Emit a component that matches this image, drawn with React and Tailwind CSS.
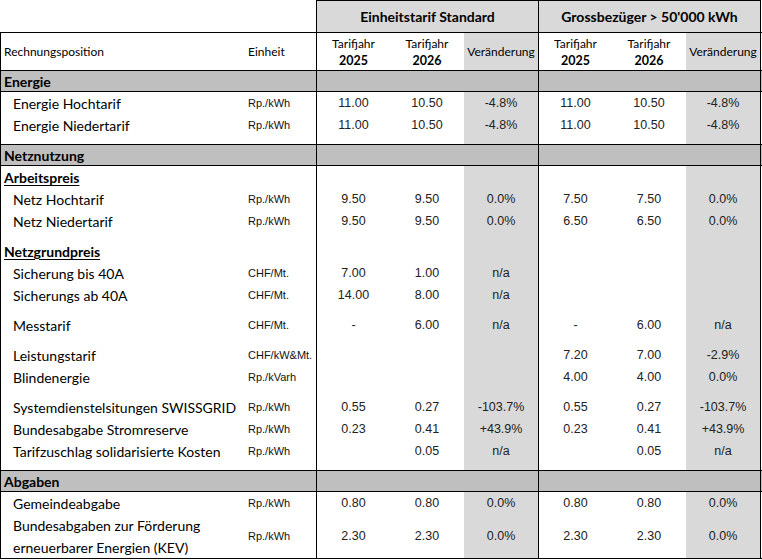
const label = "font-['Lato','Noto_Sans',sans-serif]";
const num = "font-['Liberation_Sans',Arial,sans-serif] text-[12.5px] text-[#222]";
const unitFont = "font-['Liberation_Sans',Arial,sans-serif] text-[11px] text-[#111] whitespace-nowrap";

const rows = [
  { type: 'section', text: 'Energie' },
  { h: 'h-[23px]', text: 'Energie Hochtarif', unit: 'Rp./kWh', v: ['11.00', '10.50', '-4.8%', '11.00', '10.50', '-4.8%'] },
  { h: 'h-[22px]', text: 'Energie Niedertarif', unit: 'Rp./kWh', v: ['11.00', '10.50', '-4.8%', '11.00', '10.50', '-4.8%'] },
  { type: 'spacer' },
  { type: 'section', text: 'Netznutzung' },
  { type: 'sub', h: 'h-[23px]', text: 'Arbeitspreis' },
  { h: 'h-[22px]', text: 'Netz Hochtarif', unit: 'Rp./kWh', v: ['9.50', '9.50', '0.0%', '7.50', '7.50', '0.0%'] },
  { h: 'h-[22px]', text: 'Netz Niedertarif', unit: 'Rp./kWh', v: ['9.50', '9.50', '0.0%', '6.50', '6.50', '0.0%'] },
  { type: 'sub', h: 'h-[30px]', text: 'Netzgrundpreis' },
  { h: 'h-[22px]', text: 'Sicherung bis 40A', unit: 'CHF/Mt.', v: ['7.00', '1.00', 'n/a', '', '', ''] },
  { h: 'h-[22px]', text: 'Sicherungs ab 40A', unit: 'CHF/Mt.', v: ['14.00', '8.00', 'n/a', '', '', ''] },
  { h: 'h-[30px]', text: 'Messtarif', unit: 'CHF/Mt.', v: ['-', '6.00', 'n/a', '-', '6.00', 'n/a'] },
  { h: 'h-[30px]', text: 'Leistungstarif', unit: 'CHF/kW&Mt.', v: ['', '', '', '7.20', '7.00', '-2.9%'] },
  { h: 'h-[22px]', text: 'Blindenergie', unit: 'Rp./kVarh', v: ['', '', '', '4.00', '4.00', '0.0%'] },
  { h: 'h-[30px]', text: 'Systemdienstelsitungen SWISSGRID', unit: 'Rp./kWh', v: ['0.55', '0.27', '-103.7%', '0.55', '0.27', '-103.7%'] },
  { h: 'h-[22px]', text: 'Bundesabgabe Stromreserve', unit: 'Rp./kWh', v: ['0.23', '0.41', '+43.9%', '0.23', '0.41', '+43.9%'] },
  { h: 'h-[22px]', text: 'Tarifzuschlag solidarisierte Kosten', unit: 'Rp./kWh', v: ['', '0.05', 'n/a', '', '0.05', 'n/a'] },
  { type: 'spacer' },
  { type: 'section', text: 'Abgaben' },
  { h: 'h-[23px]', text: 'Gemeindeabgabe', unit: 'Rp./kWh', v: ['0.80', '0.80', '0.0%', '0.80', '0.80', '0.0%'] },
];

const valCols = [
  'w-[74px] border-l border-black',
  'w-[74px]',
  'w-[74px] bg-[#d9d9d9]',
  'w-[74px] border-l border-black',
  'w-[74px]',
  'w-[75px] bg-[#d9d9d9] border-r border-black',
];

function Section({ text }) {
  return (
    <div className="flex h-[22px] border-y border-black bg-[#bfbfbf]">
      <div className={`w-[316px] border-l border-black pl-[3px] flex items-center text-[14px] font-bold text-black ${label}`}>{text}</div>
      <div className="w-[222px] border-l border-black" />
      <div className="w-[223px] border-l border-r border-black" />
    </div>
  );
}

function Body({ h, children, unit, v, align = 'items-end pb-[2px]', unitAlign = 'items-end pb-[4px]' }) {
  const vals = v || ['', '', '', '', '', ''];
  return (
    <div className={`flex ${h}`}>
      <div className={`w-[248px] border-l border-black flex whitespace-nowrap ${align}`}>{children}</div>
      <div className={`w-[68px] flex ${unitAlign} ${unitFont}`}>{unit}</div>
      {vals.map((x, i) => (
        <div key={i} className={`${valCols[i]} flex justify-center ${align} ${num}`}>{x}</div>
      ))}
    </div>
  );
}

export default function App() {
  return (
    <div className="w-[762px] h-[560px] bg-white text-black">
      <div className="flex h-[32px]">
        <div className="w-[316px]" />
        <div className={`w-[222px] border-l border-t border-black bg-[#d9d9d9] flex items-center justify-center text-[14px] font-bold ${label}`}>Einheitstarif Standard</div>
        <div className={`w-[223px] border-l border-t border-r border-black bg-[#d9d9d9] flex items-center justify-center text-[14px] font-bold ${label}`}>Grossbezüger &gt; 50'000 kWh</div>
      </div>
      <div className={`flex h-[38px] border-t border-black text-[12px] ${label}`}>
        <div className="w-[248px] border-l border-black pl-[3px] flex items-center">Rechnungsposition</div>
        <div className="w-[68px] flex items-center">Einheit</div>
        {valCols.map((c, i) => (
          <div key={i} className={`${c} flex flex-col items-center justify-center leading-[17px]`}>
            {i % 3 === 2 ? (
              <span>Veränderung</span>
            ) : (
              <>
                <span>Tarifjahr</span>
                <span className="font-bold text-[12.5px]">{i % 3 === 0 ? '2025' : '2026'}</span>
              </>
            )}
          </div>
        ))}
      </div>
      {rows.map((r, i) => {
        if (r.type === 'section') return <Section key={i} text={r.text} />;
        if (r.type === 'spacer') return <Body key={i} h="h-[7px]" />;
        if (r.type === 'sub')
          return (
            <Body key={i} h={r.h}>
              <span className={`pl-[3px] text-[14px] leading-[18px] font-bold underline underline-offset-2 ${label}`}>{r.text}</span>
            </Body>
          );
        return (
          <Body key={i} h={r.h} unit={r.unit} v={r.v}>
            <span className={`pl-[12px] text-[14px] leading-[18px] ${label}`}>{r.text}</span>
          </Body>
        );
      })}
      <div className="border-b border-black">
        <Body h="h-[43px]" unit="Rp./kWh" v={['2.30', '2.30', '0.0%', '2.30', '2.30', '0.0%']} align="items-center" unitAlign="items-center">
          <span className={`pl-[12px] text-[14px] leading-[22px] ${label}`}>
            Bundesabgaben zur Förderung
            <br />
            erneuerbarer Energien (KEV)
          </span>
        </Body>
      </div>
    </div>
  );
}
